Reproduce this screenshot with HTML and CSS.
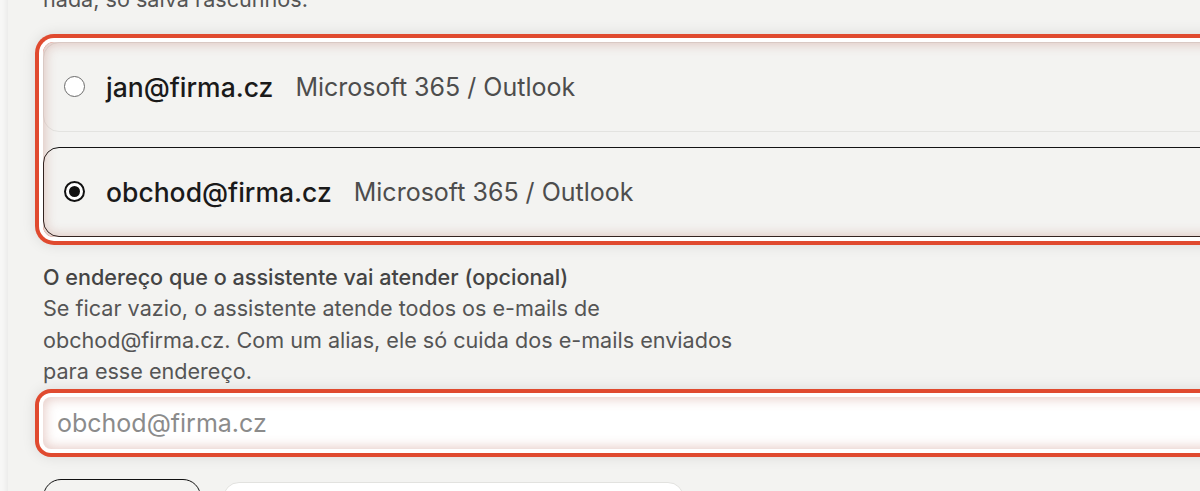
FILE: index.html
```html
<!DOCTYPE html>
<html lang="pt">
<head>
<meta charset="utf-8">
<title>Conta</title>
<link rel="stylesheet" href="styles.css">
</head>
<body>
<div class="panel">
  <p class="intro">nada, só salva rascunhos.</p>

  <div class="group">
    <label class="card">
      <span class="radio"></span>
      <span class="email">jan@firma.cz</span>
      <span class="provider">Microsoft 365 / Outlook</span>
    </label>
    <label class="card selected">
      <span class="radio checked"></span>
      <span class="email">obchod@firma.cz</span>
      <span class="provider">Microsoft 365 / Outlook</span>
    </label>
  </div>

  <div class="field">
    <div class="label">O endereço que o assistente vai atender (opcional)</div>
    <p class="help">Se ficar vazio, o assistente atende todos os e-mails de obchod@firma.cz. Com um alias, ele só cuida dos e-mails enviados para esse endereço.</p>
    <div class="input-wrap">
      <input class="input" type="text" placeholder="obchod@firma.cz">
    </div>
  </div>

  <div class="actions">
    <button class="btn btn-outline"></button>
    <button class="btn btn-light"></button>
  </div>
</div>
</body>
</html>
```

FILE: styles.css
```css
* { box-sizing: border-box; }
html, body { margin: 0; padding: 0; }
body {
  background: #f7f7f6;
  font-family: Inter, "Noto Sans", sans-serif;
  overflow: hidden;
  height: 491px;
  padding-left: 8px;
}
.panel {
  background: #f3f3f1;
  width: 1300px;
  height: 600px;
  padding: 0 0 0 35px;
  box-shadow: -2px 0 5px rgba(0, 0, 0, 0.06);
}
.intro {
  margin: 0;
  margin-top: -16px;
  font-size: 21.6px;
  line-height: 31.5px;
  color: #555;
}
.group {
  position: relative;
  margin-top: 26px;
  width: 1250px;
  border-radius: 11px;
  display: flex;
  flex-direction: column;
  gap: 15px;
  box-shadow: 0 0 0 4px #ffffff, 0 0 0 8px #e04a2f, 0 0 14px 8px rgba(0, 0, 0, 0.10);
}
.group::after {
  content: "";
  position: absolute;
  inset: 0;
  border-radius: 11px;
  box-shadow: inset 0 0 12px 2px rgba(180, 95, 80, 0.32);
  pointer-events: none;
}
.card {
  display: flex;
  align-items: center;
  height: 90px;
  padding-left: 20px;
  border: 1px solid #e3e3e0;
  border-radius: 16px;
  background: #f3f3f1;
}
.card.selected {
  border-color: #141414;
}
.radio {
  width: 21px;
  height: 21px;
  border-radius: 50%;
  border: 1.5px solid #6b6b6b;
  background: #fff;
  flex: none;
  margin-right: 21px;
  display: flex;
  align-items: center;
  justify-content: center;
}
.radio.checked {
  border: 2px solid #111;
}
.radio.checked::before {
  content: "";
  width: 11px;
  height: 11px;
  border-radius: 50%;
  background: #111;
}
.email {
  font-size: 26.5px;
  font-weight: 500;
  color: #1a1a1a;
  margin-right: 22px;
}
.provider {
  font-size: 25px;
  color: #4d4d4d;
}
.field {
  margin-top: 25px;
}
.label {
  font-size: 21.6px;
  line-height: 31.5px;
  font-weight: 500;
  color: #444;
}
.help {
  margin: 0;
  max-width: 720px;
  font-size: 21.6px;
  line-height: 31.5px;
  color: #555;
}
.input-wrap {
  margin-top: 9px;
  width: 1250px;
}
.input {
  display: block;
  width: 100%;
  height: 52px;
  border: none;
  border-radius: 8px;
  background: #fff;
  padding: 0 14px;
  font-family: Inter, "Noto Sans", sans-serif;
  font-size: 25px;
  color: #222;
  outline: none;
  box-shadow: 0 0 0 4px #ffffff, 0 0 0 8px #e04a2f, 0 0 14px 8px rgba(0, 0, 0, 0.10), inset 0 0 12px 2px rgba(180, 95, 80, 0.32);
}
.input::placeholder {
  color: #8b8b8b;
}
.actions {
  display: flex;
  gap: 22px;
  margin-top: 30px;
  align-items: flex-start;
}
.btn {
  height: 50px;
  font-family: Inter, sans-serif;
  padding: 0;
}
.btn-outline {
  width: 158px;
  border: 1.5px solid #111;
  border-radius: 18px;
  background: #f3f3f1;
}
.btn-light {
  width: 461px;
  margin-top: 3px;
  border: 1px solid #e2e2df;
  border-radius: 16px;
  background: #fff;
}
```
